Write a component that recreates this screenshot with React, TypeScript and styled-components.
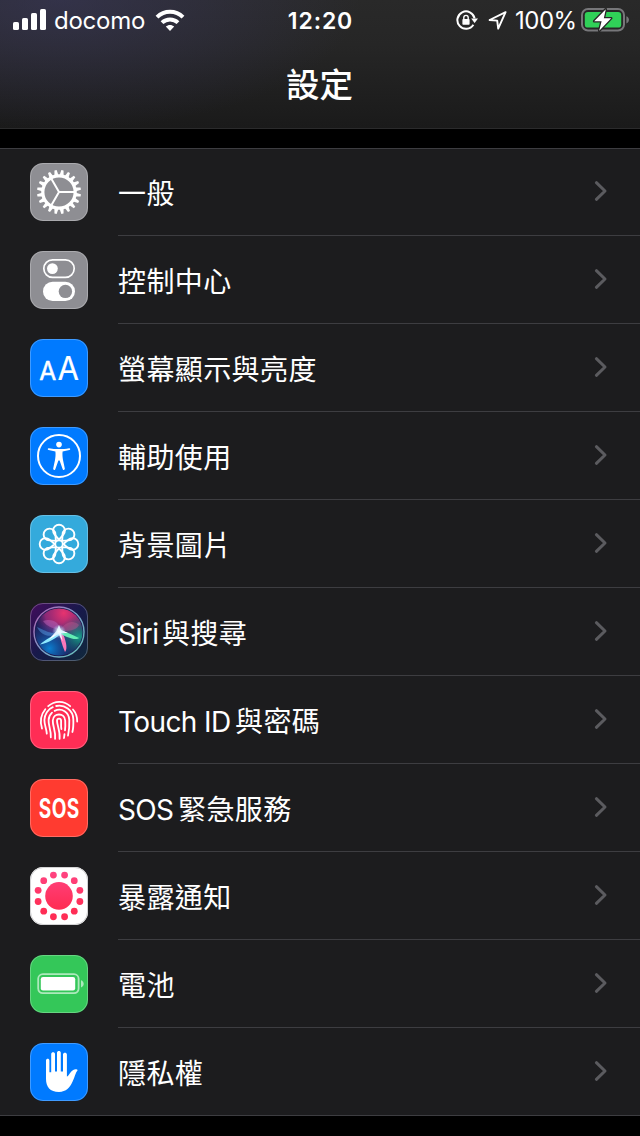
import React from "react";
import styled, { createGlobalStyle } from "styled-components";

const GlobalStyle = createGlobalStyle`
  * {
    box-sizing: border-box;
  }

  body {
    margin: 0;
    background: #000;
    color: #fff;
    font-family: "Inter", "Noto Sans CJK TC", sans-serif;
  }
`;

const Screen = styled.div`
  width: 640px;
  height: 1136px;
  overflow: hidden;
  background: #000;
`;

const Header = styled.header`
  height: 129px;
  border-bottom: 1px solid #2b2b2c;
  background:
    radial-gradient(ellipse 300px 130px at 60px 0, rgba(62, 60, 105, 0.5), rgba(62, 60, 105, 0) 100%),
    linear-gradient(#292929, #262626 35%, #1a1a1a);
`;

const StatusBar = styled.div`
  display: grid;
  grid-template-columns: 1fr auto 1fr;
  align-items: center;
  height: 40px;
  padding: 0 11px 0 13px;
`;

const StatusGroup = styled.div<{ $end?: boolean }>`
  display: flex;
  align-items: center;
  justify-content: ${(p) => (p.$end ? "flex-end" : "flex-start")};

  svg {
    display: block;
    flex: none;
  }
`;

const StatusText = styled.span<{ $width: number; $spacing?: number }>`
  width: ${(p) => p.$width}px;
  padding-top: 2px;
  margin: 0 8px;
  font-size: 24px;
  line-height: 38px;
  letter-spacing: ${(p) => p.$spacing ?? 0}px;
  white-space: nowrap;
`;

const Clock = styled.span`
  padding: 2px 1px 0 0;
  font-size: 23px;
  line-height: 38px;
  font-weight: 600;
  letter-spacing: 0.9px;
`;

const LockWrap = styled.span`
  margin-right: 10px;
`;

const Title = styled.h1`
  margin: 0;
  padding: 20px 1px 0 0;
  font-size: 33.5px;
  line-height: 50px;
  font-weight: 500;
  text-align: center;
`;

const List = styled.ul`
  margin: 19px 0 0;
  padding: 0;
  list-style: none;
  background: #1c1c1e;
  box-shadow: inset 0 1px #3d3d41, inset 0 -1px #3d3d41;
`;

const Row = styled.li`
  display: flex;
  height: 88px;
  padding-left: 30px;

  > svg {
    flex: none;
    margin: 15px 30px 0 0;
  }
`;

const RowBody = styled.div`
  display: flex;
  flex: 1;
  align-items: center;
  justify-content: space-between;
  padding-right: 32px;
  border-bottom: 1px solid #3d3d41;
`;

const Label = styled.span`
  display: flex;
  padding-top: 5px;
  font-size: 28px;
  line-height: 40px;
  letter-spacing: 0.4px;
  white-space: nowrap;
`;

const Latin = styled.span<{ $width: number; $spacing: number }>`
  width: ${(p) => p.$width}px;
  letter-spacing: ${(p) => p.$spacing}px;
`;

const Tile: React.FC<{ color: string; children: React.ReactNode }> = ({ color, children }) => (
  <svg width="58" height="58" viewBox="0 0 58 58" fill="none">
    <rect width="58" height="58" rx="13" fill={color} />
    {children}
    <rect x=".5" y=".5" width="57" height="57" rx="12.5" stroke="#fff" strokeOpacity=".25" />
  </svg>
);

const range = (n: number) => Array.from({ length: n }, (_, i) => i);

const GearIcon = () => (
  <Tile color="#8e8e93">
    <circle cx="29" cy="29" r="16.2" stroke="#fff" strokeWidth="3.2" />
    {range(20).map((i) => (
      <path key={i} d="M27 12.2 L27.9 7 H30.1 L31 12.2Z" fill="#fff" transform={`rotate(${i * 18 + 9} 29 29)`} />
    ))}
    <path d="M29 29H44M29 29L21.5 16M29 29L21.5 42" stroke="#fff" strokeWidth="2" />
  </Tile>
);

const ControlIcon = () => (
  <Tile color="#8e8e93">
    <rect x="13.8" y="8.8" width="30.4" height="17.6" rx="8.8" stroke="#fff" strokeWidth="1.7" />
    <circle cx="22.4" cy="17.6" r="5.4" fill="#fff" />
    <rect x="13" y="30.8" width="32" height="19.2" rx="9.6" fill="#fff" />
    <circle cx="35.4" cy="40.4" r="6.7" fill="#8e8e93" />
  </Tile>
);

const DisplayIcon = () => (
  <Tile color="#007aff">
    <g fill="#fff" stroke="#fff" strokeLinejoin="round" fontFamily="Inter, sans-serif">
      <text x="9.3" y="41" fontSize="25" strokeWidth=".5" textLength="17" lengthAdjust="spacingAndGlyphs">A</text>
      <text x="27.5" y="41" fontSize="32.5" strokeWidth=".2" textLength="21.5" lengthAdjust="spacingAndGlyphs">A</text>
    </g>
  </Tile>
);

const AccessibilityIcon = () => (
  <Tile color="#007aff">
    <circle cx="29" cy="29" r="21" stroke="#fff" strokeWidth="2" />
    <circle cx="29" cy="17.6" r="2.8" fill="#fff" />
    <path
      d="M18.8 21.2 C25 22.4 33 22.4 39.2 21.2 C40.5 21.1 40.6 22.8 39.4 23.1 L32.6 24.5 C32.2 27.5 32.6 30.5 33 33 L34.8 41.6 C35 43.2 33.2 43.6 32.7 42.2 L29.6 33.4 H28.4 L25.3 42.2 C24.8 43.6 23 43.2 23.2 41.6 L25 33 C25.4 30.5 25.8 27.5 25.4 24.5 L18.6 23.1 C17.4 22.8 17.5 21.1 18.8 21.2Z"
      fill="#fff"
    />
  </Tile>
);

const WallpaperIcon = () => (
  <Tile color="#34aadc">
    <g stroke="#fff" strokeWidth="1.9" strokeLinejoin="round">
      <circle cx="29" cy="29" r="3.8" />
      {range(8).map((i) => (
        <path
          key={i}
          d="M29 24.6 L24.63 19.55 A5.9 5.9 0 1 1 33.37 19.55Z"
          transform={`rotate(${i * 45} 29 29)`}
        />
      ))}
    </g>
  </Tile>
);

const SiriIcon = () => (
  <Tile color="url(#siriTile)">
    <defs>
      <linearGradient id="siriTile" x1="0" y1="0" x2="1" y2="1">
        <stop offset="0" stopColor="#430c5c" />
        <stop offset=".5" stopColor="#17194a" />
        <stop offset="1" stopColor="#10293c" />
      </linearGradient>
      <linearGradient id="siriRing" x1="0" y1="0" x2="1" y2="1">
        <stop offset="0" stopColor="#b65bb0" />
        <stop offset=".5" stopColor="#7b9cc8" />
        <stop offset="1" stopColor="#64c5b8" />
      </linearGradient>
      <radialGradient id="siriPink" cx=".6" cy=".1" r=".65">
        <stop offset="0" stopColor="#e8336f" />
        <stop offset=".6" stopColor="#a52b7e" stopOpacity=".8" />
        <stop offset="1" stopColor="#4a2580" stopOpacity="0" />
      </radialGradient>
      <radialGradient id="siriBlue" cx=".3" cy=".85" r=".6">
        <stop offset="0" stopColor="#0b7fd0" />
        <stop offset="1" stopColor="#1b3c90" stopOpacity="0" />
      </radialGradient>
      <radialGradient id="siriTeal" cx=".92" cy=".6" r=".45">
        <stop offset="0" stopColor="#18a088" />
        <stop offset="1" stopColor="#126070" stopOpacity="0" />
      </radialGradient>
      <radialGradient id="siriGlow">
        <stop offset="0" stopColor="#fff" />
        <stop offset=".35" stopColor="#d9f4ff" stopOpacity=".75" />
        <stop offset="1" stopColor="#8fc8ff" stopOpacity="0" />
      </radialGradient>
      <filter id="siriSoft">
        <feGaussianBlur stdDeviation=".6" />
      </filter>
    </defs>
    <circle cx="29" cy="29" r="25" fill="#1b1b52" />
    <circle cx="29" cy="29" r="23.6" fill="url(#siriPink)" />
    <circle cx="29" cy="29" r="23.6" fill="url(#siriBlue)" />
    <circle cx="29" cy="29" r="23.6" fill="url(#siriTeal)" />
    <g filter="url(#siriSoft)">
      <path d="M13 18 C22 15 31 20 30 28 C24 25 17 24 13 18Z" fill="#c06bc4" opacity=".45" />
      <path d="M30 28 C34 20 42 16 49 22 C46 28 38 28 30 28Z" fill="#cc5590" opacity=".4" />
      <path d="M7 24 C15 27 20 32 29 29 C22 36 11 33 7 24Z" fill="#57a5ec" opacity=".45" />
      <path d="M29 27 C24 33 16 36 10 41.5 C19 40 26 35 32 30Z" fill="#8eeaff" />
      <path d="M29 28 C30 35 32 42 35 49 C38 46 36 36 31 27Z" fill="#fb78ba" />
      <path d="M28 26 C36 29 43 32 49 35 C46 38 35 34 28 29Z" fill="#62edb4" />
      <path d="M29 22 L31 27 L38 30 L31 30 L32.5 38 L28.5 31 L19 36.5 L26.5 28Z" fill="#fff" />
    </g>
    <circle cx="29" cy="28.5" r="7" fill="url(#siriGlow)" />
    <circle cx="29" cy="29" r="25" stroke="url(#siriRing)" strokeWidth="1.4" />
  </Tile>
);

const TouchIdIcon = () => (
  <Tile color="#ff2d55">
    <g stroke="#fff" strokeWidth="1.8" strokeLinecap="round">
      <path d="M18.2 15.2 C24.5 9.3 34 9.3 40.2 15.2" />
      <path d="M15.3 18.2 C10.5 24 9.9 31 12 37.6" />
      <path d="M43 18.5 C46 22 47.3 26 47.2 30.6" />
      <path d="M16.8 42.6 C16.6 38 14.3 34 14.4 29 C14.5 23.5 18 18 22.8 16.2" />
      <path d="M26.2 15 C34.5 13.2 43 19 43.3 28 C43.5 33 43.5 37 42.4 41" />
      <path d="M20.8 46.4 C21.4 39 18.2 35 18.6 29 C18.8 26 20 23.5 22 21.7" />
      <path d="M24.6 19.9 C32 16.4 39 21.5 39.3 29 C39.5 34 39.3 39 38 44.6" />
      <path d="M25.1 47.8 C26 40 22.5 35 22.8 29.5 C23.2 21.5 34.8 21.5 35.2 29.5 C35.4 33 35.4 36 35 39.4" />
      <path d="M29.6 47.8 C30.4 40 27 34.5 27 29.8 C27 27 31 27 31.1 29.8 C31.2 33 30.8 35.5 31.4 38" />
      <path d="M34.5 43.2 L34 47" />
    </g>
  </Tile>
);

const SosIcon = () => (
  <Tile color="#ff3b30">
    <text
      transform="translate(29.2 38.5) scale(.72 1)"
      textAnchor="middle"
      fill="#fff"
      fontFamily="Inter, sans-serif"
      fontSize="26.5"
      fontWeight="700"
      letterSpacing=".6"
    >
      SOS
    </text>
  </Tile>
);

const ExposureIcon = () => (
  <Tile color="#fff">
    <defs>
      <linearGradient id="exposure" gradientUnits="userSpaceOnUse" x1="0" y1="4" x2="0" y2="40">
        <stop offset="0" stopColor="#ff4583" />
        <stop offset="1" stopColor="#ff2d55" />
      </linearGradient>
    </defs>
    <g fill="url(#exposure)">
      <circle cx="29" cy="28.9" r="13.8" />
      {range(12).map((i) => {
        const angle = ((i * 30 + 15) * Math.PI) / 180;
        return <circle key={i} cx={29 + 21.6 * Math.cos(angle)} cy={28.9 + 21.6 * Math.sin(angle)} r="3.4" />;
      })}
    </g>
    <rect x=".5" y=".5" width="57" height="57" rx="12.5" stroke="#c4c4c6" />
  </Tile>
);

const BatteryIcon = () => (
  <Tile color="#34c759">
    <rect x="8.2" y="19.2" width="40.4" height="19" rx="4.6" stroke="#fff" strokeOpacity=".6" strokeWidth="1.8" />
    <rect x="10.8" y="22" width="34.4" height="13.4" rx="2.2" fill="#fff" />
    <path d="M51 25.2 C54.6 26.4 54.6 31.2 51 32.4Z" fill="#fff" fillOpacity=".6" />
  </Tile>
);

const PrivacyIcon = () => (
  <Tile color="#007aff">
    <path
      d="M16 17.4 C16 15.2 19.4 15.2 19.4 17.4 V29.2 H21.2 V11 C21.2 8.6 25 8.6 25 11 V28.6 H27 V9.8 C27 7.4 30.8 7.4 30.8 9.8 V28.6 H33 V11.6 C33 9.2 36.9 9.2 36.9 11.6 V33.6 C39 32.6 40.4 28.4 43.2 26.9 C45 25.9 47.4 26.1 47.6 27.2 C45.6 29.4 44.8 34 42.6 38.6 C39.8 44.6 36.2 49 29 49 C20 49 16 44 16 35.8Z"
      fill="#fff"
    />
  </Tile>
);

const SignalIcon = () => (
  <svg width="33" height="22" viewBox="0 0 33 22" fill="#fff">
    <rect y="13" width="6" height="8" rx="1.6" />
    <rect x="9" y="9" width="6" height="12" rx="1.6" />
    <rect x="18" y="4" width="6" height="17" rx="1.6" />
    <rect x="27" width="6" height="21" rx="1.6" />
  </svg>
);

const WifiIcon = () => (
  <svg width="30" height="22" viewBox="0 0 30 22" fill="none" stroke="#fff" strokeWidth="4">
    <path d="M2 8.2 C9.3 1 20.7 1 28 8.2" />
    <path d="M7 13.6 C11.6 9.3 18.4 9.3 23 13.6" />
    <path d="M15 22 L10.8 17.6 C13.3 15.5 16.7 15.5 19.2 17.6Z" fill="#fff" stroke="none" />
  </svg>
);

const LockIcon = () => (
  <svg width="22" height="22" viewBox="0 0 22 22" fill="none">
    <path d="M17.4 15.8 A8.7 8.7 0 1 1 18.6 9.4" stroke="#fff" strokeWidth="2" />
    <path d="M15.2 9.6 H22 L18.6 14Z" fill="#fff" />
    <rect x="6.4" y="10" width="7.2" height="5.8" rx=".8" fill="#fff" />
    <path d="M7.8 10.5 V8.6 C7.8 5.6 12.2 5.6 12.2 8.6 V10.5" stroke="#fff" strokeWidth="1.4" />
  </svg>
);

const LocationIcon = () => (
  <svg width="19" height="20" viewBox="0 0 19 20" fill="none" stroke="#fff" strokeWidth="1.9" strokeLinejoin="round">
    <path d="M17.6 2.2 L1.6 10 L9.2 10.6 L10.2 18.6Z" />
  </svg>
);

const ChargeIcon = () => (
  <svg width="48" height="26" viewBox="0 0 48 26" fill="none">
    <rect x="1" y="2" width="42" height="21.5" rx="6" stroke="#77777a" strokeWidth="2" />
    <rect x="3.8" y="5" width="36.4" height="15.6" rx="3.2" fill="#30d158" />
    <path d="M45.4 9.2 C48.8 10.4 48.8 15.2 45.4 16.4Z" fill="#77777a" />
    <path
      d="M24.8 2.2 L13.2 14.2 H20.6 L18.2 23.8 L30.2 11.2 H22.8Z"
      fill="#fff"
      stroke="#262626"
      strokeWidth="2.6"
      strokeLinejoin="round"
      paintOrder="stroke"
    />
  </svg>
);

const Chevron = () => (
  <svg width="14" height="24" viewBox="0 0 14 24" fill="none">
    <path d="M2.4 2.7 L11 11 L2.4 19.3" stroke="#5b5b5f" strokeWidth="3" strokeLinecap="round" strokeLinejoin="round" />
  </svg>
);

interface Setting {
  label: string;
  latin?: { text: string; width: number; spacing: number };
  Icon: React.FC;
}

const settings: Setting[] = [
  { label: "一般", Icon: GearIcon },
  { label: "控制中心", Icon: ControlIcon },
  { label: "螢幕顯示與亮度", Icon: DisplayIcon },
  { label: "輔助使用", Icon: AccessibilityIcon },
  { label: "背景圖片", Icon: WallpaperIcon },
  { label: "與搜尋", latin: { text: "Siri", width: 44, spacing: -0.5 }, Icon: SiriIcon },
  { label: "與密碼", latin: { text: "Touch ID", width: 117, spacing: -0.6 }, Icon: TouchIdIcon },
  { label: "緊急服務", latin: { text: "SOS", width: 60, spacing: -0.7 }, Icon: SosIcon },
  { label: "暴露通知", Icon: ExposureIcon },
  { label: "電池", Icon: BatteryIcon },
  { label: "隱私權", Icon: PrivacyIcon },
];

const App: React.FC = () => {
  return (
    <>
      <GlobalStyle />
      <Screen>
        <Header>
          <StatusBar>
            <StatusGroup>
              <SignalIcon />
              <StatusText $width={93} $spacing={-0.25}>
                docomo
              </StatusText>
              <WifiIcon />
            </StatusGroup>
            <Clock>12:20</Clock>
            <StatusGroup $end>
              <LockWrap>
                <LockIcon />
              </LockWrap>
              <LocationIcon />
              <StatusText $width={58} $spacing={-0.5}>
                100%
              </StatusText>
              <ChargeIcon />
            </StatusGroup>
          </StatusBar>
          <Title>設定</Title>
        </Header>
        <List>
          {settings.map(({ label, latin, Icon }) => (
            <Row key={label}>
              <Icon />
              <RowBody>
                <Label>
                  {latin && (
                    <Latin $width={latin.width} $spacing={latin.spacing}>
                      {latin.text}
                    </Latin>
                  )}
                  {label}
                </Label>
                <Chevron />
              </RowBody>
            </Row>
          ))}
        </List>
      </Screen>
    </>
  );
};

export default App;
